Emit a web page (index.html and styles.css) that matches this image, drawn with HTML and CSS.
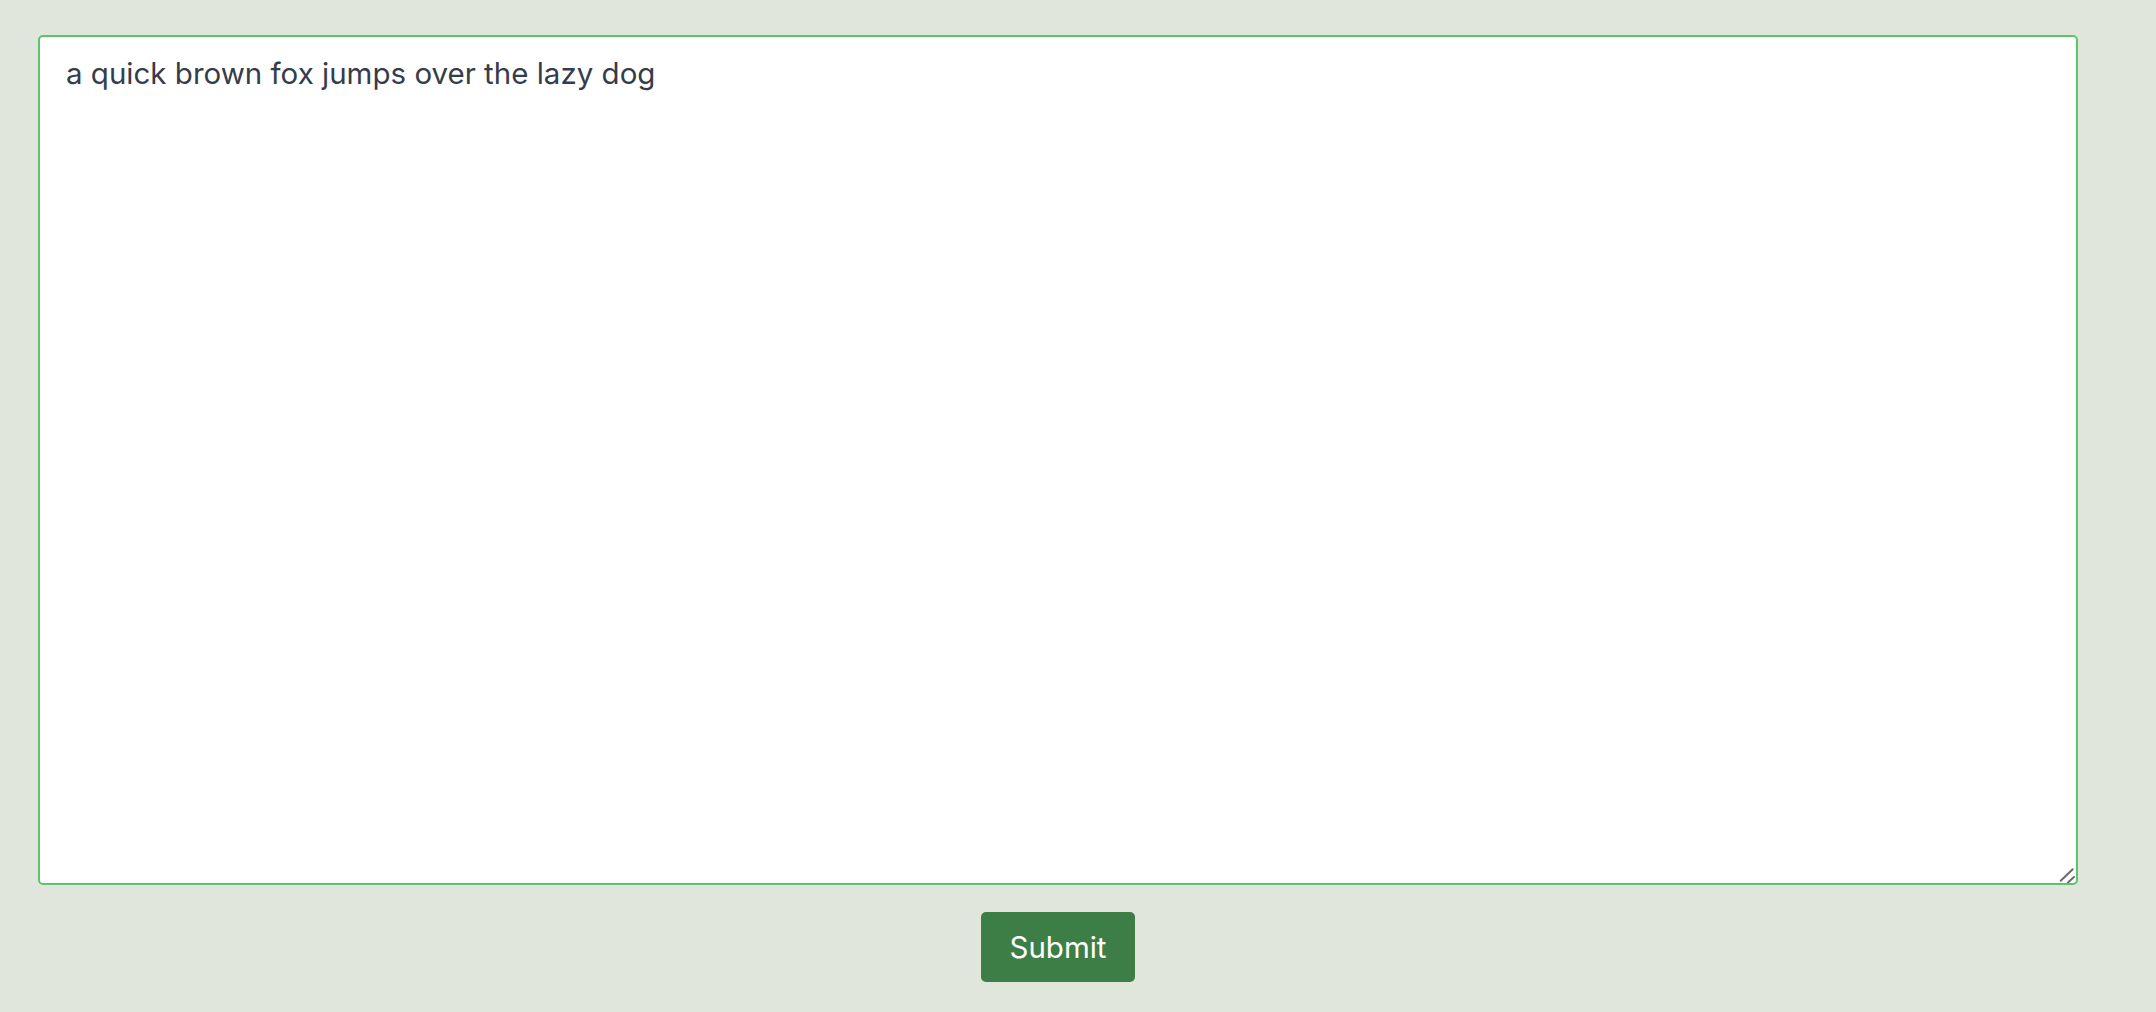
FILE: index.html
```html
<!DOCTYPE html>
<html>
<head>
<meta charset="utf-8">
<link rel="stylesheet" href="styles.css">
</head>
<body>
<form class="page">
  <div class="editor-wrap">
    <textarea class="editor">a quick brown fox jumps over the lazy dog</textarea>
    <svg class="grip" width="20" height="20" viewBox="0 0 20 20" aria-hidden="true">
      <line x1="4.7" y1="17.7" x2="16.7" y2="6.3" stroke="#6a6a6a" stroke-width="2" stroke-linecap="round"/>
      <line x1="12" y1="19.5" x2="18" y2="14" stroke="#6a6a6a" stroke-width="2" stroke-linecap="round"/>
    </svg>
  </div>
  <div class="actions">
    <button type="button" class="submit">Submit</button>
  </div>
</form>
</body>
</html>
```
FILE: styles.css
```css
html, body {
  margin: 0;
  padding: 0;
  background: #e0e6dc;
  height: 100%;
}
.page {
  padding: 35px 78px 0 38px;
  display: flex;
  flex-direction: column;
}
.editor-wrap {
  position: relative;
  height: 850px;
}
.editor {
  display: block;
  box-sizing: border-box;
  width: 100%;
  height: 100%;
  border: 2px solid #5ec46a;
  border-radius: 5px;
  background: #fff;
  padding: 14px 26px 12px 26px;
  font-family: Inter, "Noto Sans", sans-serif;
  font-size: 29.5px;
  line-height: 44px;
  color: #353c4b;
  outline: none;
  resize: none;
  margin: 0;
}
.grip {
  position: absolute;
  right: 2px;
  bottom: 2px;
  pointer-events: none;
}
.actions {
  display: flex;
  justify-content: center;
  margin-top: 27px;
}
.submit {
  width: 154px;
  height: 70px;
  background: #3c7e45;
  color: #fff;
  border: none;
  border-radius: 5px;
  font-family: Inter, "Noto Sans", sans-serif;
  font-size: 29.5px;
  font-weight: 400;
  padding: 0;
}
```
